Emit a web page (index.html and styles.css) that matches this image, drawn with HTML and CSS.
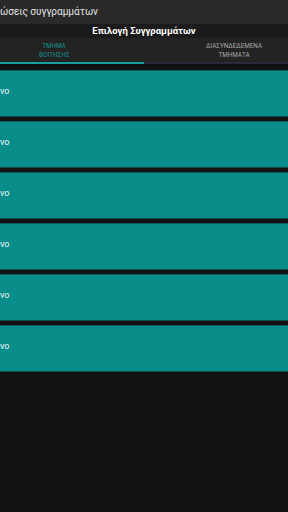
FILE: index.html
```html
<!DOCTYPE html>
<html lang="el">
<head>
  <meta charset="UTF-8">
  <meta name="viewport" content="width=device-width, initial-scale=1">
  <title>Δηλώσεις συγγραμμάτων</title>
  <link rel="stylesheet" href="styles.css">
</head>
<body>
  <div class="appbar">ώσεις συγγραμμάτων</div>
  <div class="title">Επιλογή Συγγραμμάτων</div>

  <div class="tabs">
    <div class="tab active">ΤΜΗΜΑ<br>ΦΟΙΤΗΣΗΣ</div>
    <div class="tab">ΔΙΑΣΥΝΔΕΔΕΜΕΝΑ<br>ΤΜΗΜΑΤΑ</div>
  </div>

  <div class="list">
    <div class="card">νο</div>
    <div class="card">νο</div>
    <div class="card">νο</div>
    <div class="card">νο</div>
    <div class="card">νο</div>
    <div class="card">νο</div>
  </div>
</body>
</html>
```

FILE: styles.css
```css
html, body {
  margin: 0;
  padding: 0;
}
body {
  width: 288px;
  height: 512px;
  overflow: hidden;
  background: #121212;
  font-family: Roboto, "Noto Sans", sans-serif;
}
.appbar {
  height: 24px;
  line-height: 23px;
  background: #292929;
  color: #e2e2e2;
  font-size: 10px;
  white-space: nowrap;
}
.title {
  height: 14px;
  line-height: 14px;
  background: #1b1b1b;
  color: #fff;
  font-size: 9.5px;
  font-weight: bold;
  text-align: center;
}
.tabs {
  display: grid;
  grid-template-columns: 144px 144px;
  height: 26px;
  background: #232323;
}
.tab {
  font-size: 6.3px;
  line-height: 9px;
  padding: 4px 0 0 36px;
  text-align: center;
  color: #a8a8a8;
  box-sizing: border-box;
  border-bottom: 2px solid #2a2838;
}
.tab.active {
  padding: 4px 36px 0 0;
  color: #16928e;
  border-bottom-color: #17a09b;
}
.list {
  padding-top: 7px;
}
.card {
  height: 45px;
  margin-bottom: 6px;
  background: #088d8b;
  color: #f2f2f2;
  font-size: 9px;
  line-height: 40px;
  box-shadow: 0 1px 0 #0d4c4a, 0 -1px 0 #0c5f5d;
}
```
